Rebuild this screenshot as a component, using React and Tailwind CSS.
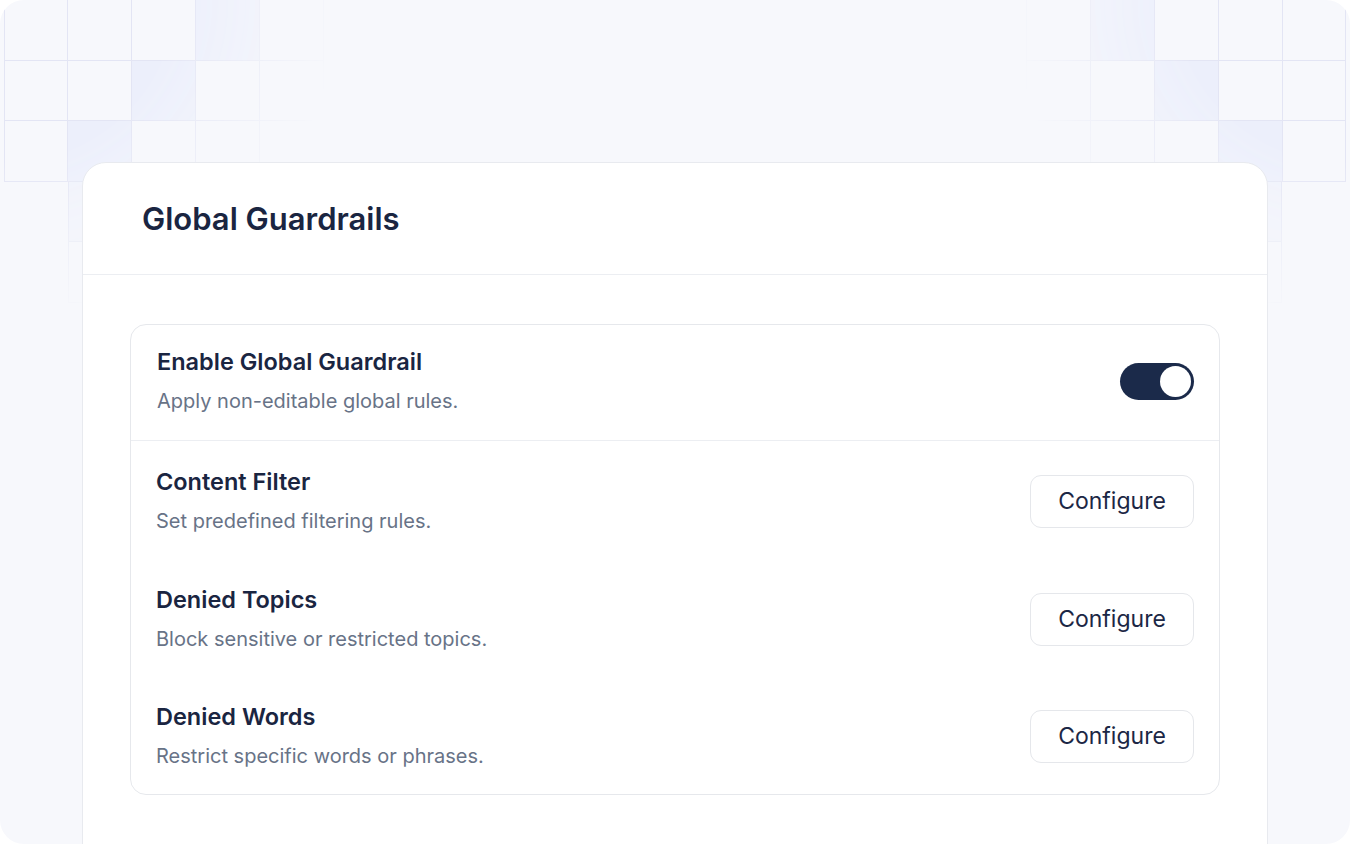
import React from "react";

const CELLS = [
  // [row, col, highlight]
  [0, 0, 0], [0, 1, 0], [0, 2, 0], [0, 3, 1], [0, 4, 0],
  [1, 0, 0], [1, 1, 0], [1, 2, 1], [1, 3, 0], [1, 4, 0],
  [2, 0, 0], [2, 1, 1], [2, 2, 0], [2, 3, 0], [2, 4, 0],
  [3, 1, 2], [3, 2, 0],
  [4, 1, 0], [4, 2, 0],
];

const ROW_CLASSES = ["row-start-1", "row-start-2", "row-start-3", "row-start-4", "row-start-5"];
const COL_CLASSES = ["col-start-1", "col-start-2", "col-start-3", "col-start-4", "col-start-5"];

function GridDecor({ mirrored }) {
  return (
    <div
      className={
        "pointer-events-none absolute top-0 h-[310px] w-[340px] [mask-image:radial-gradient(ellipse_340px_320px_at_0_0,#000_50%,transparent_100%)] [-webkit-mask-image:radial-gradient(ellipse_340px_320px_at_0_0,#000_50%,transparent_100%)] " +
        (mirrored ? "right-0 -scale-x-100" : "left-0")
      }
    >
      <div className="ml-[4px] grid grid-cols-[repeat(5,64px)] grid-rows-[repeat(5,60.5px)]">
        {CELLS.map(([r, c, h], i) => {
          const hasLeft = CELLS.some(([r2, c2]) => r2 === r && c2 === c - 1);
          return (
            <div
              key={i}
              className={
                ROW_CLASSES[r] +
                " " +
                COL_CLASSES[c] +
                " border-r border-b border-[#e3e5f4] " +
                (hasLeft ? "" : "border-l ") +
                (h === 1 ? "bg-[#eceffb]" : h === 2 ? "bg-[#f0f2fb]" : "")
              }
            />
          );
        })}
      </div>
    </div>
  );
}

function Toggle() {
  return (
    <div className="flex h-[37px] w-[74px] items-center justify-end rounded-full bg-[#1b2a4a] pr-[3px]">
      <div className="h-[31px] w-[31px] rounded-full bg-white" />
    </div>
  );
}

function ConfigureButton() {
  return (
    <button className="flex h-[53px] w-[164px] items-center justify-center rounded-[11px] border border-[#e5e7eb] bg-white text-[23px] leading-none text-[#1c2745]">
      Configure
    </button>
  );
}

function RowText({ title, sub }) {
  return (
    <div className="flex flex-col">
      <div className="text-[23.5px] font-semibold leading-[28px] text-[#1a2541]">{title}</div>
      <div className="mt-[11px] text-[20px] leading-[28px] text-[#687387]">{sub}</div>
    </div>
  );
}

export default function App() {
  const rows = [
    { title: "Content Filter", sub: "Set predefined filtering rules." },
    { title: "Denied Topics", sub: "Block sensitive or restricted topics." },
    { title: "Denied Words", sub: "Restrict specific words or phrases." },
  ];
  return (
    <div className="h-[844px] w-[1350px] bg-white font-['Inter','Noto_Sans',sans-serif]">
      <div className="relative h-full overflow-hidden rounded-[24px] bg-[#f7f8fc] px-[82px] pt-[162px]">
        <GridDecor />
        <GridDecor mirrored />
        <div className="relative h-[760px] rounded-t-[24px] border border-[#e8eaef] bg-white">
          <div className="flex h-[112px] items-center border-b border-[#eceef2] pl-[59px]">
            <h1 className="text-[31px] font-semibold leading-none text-[#1a2541]">Global Guardrails</h1>
          </div>
          <div className="px-[47px] pt-[49px]">
            <div className="rounded-[16px] border border-[#e6e8ec]">
              <div className="flex items-center justify-between border-b border-[#eceef2] pb-[25px] pl-[26px] pr-[25px] pt-[23px]">
                <RowText title="Enable Global Guardrail" sub="Apply non-editable global rules." />
                <Toggle />
              </div>
              {rows.map((r) => (
                <div key={r.title} className="flex items-center justify-between pb-[23.5px] pl-[25px] pr-[25px] pt-[27px]">
                  <RowText title={r.title} sub={r.sub} />
                  <ConfigureButton />
                </div>
              ))}
            </div>
          </div>
        </div>
      </div>
    </div>
  );
}
